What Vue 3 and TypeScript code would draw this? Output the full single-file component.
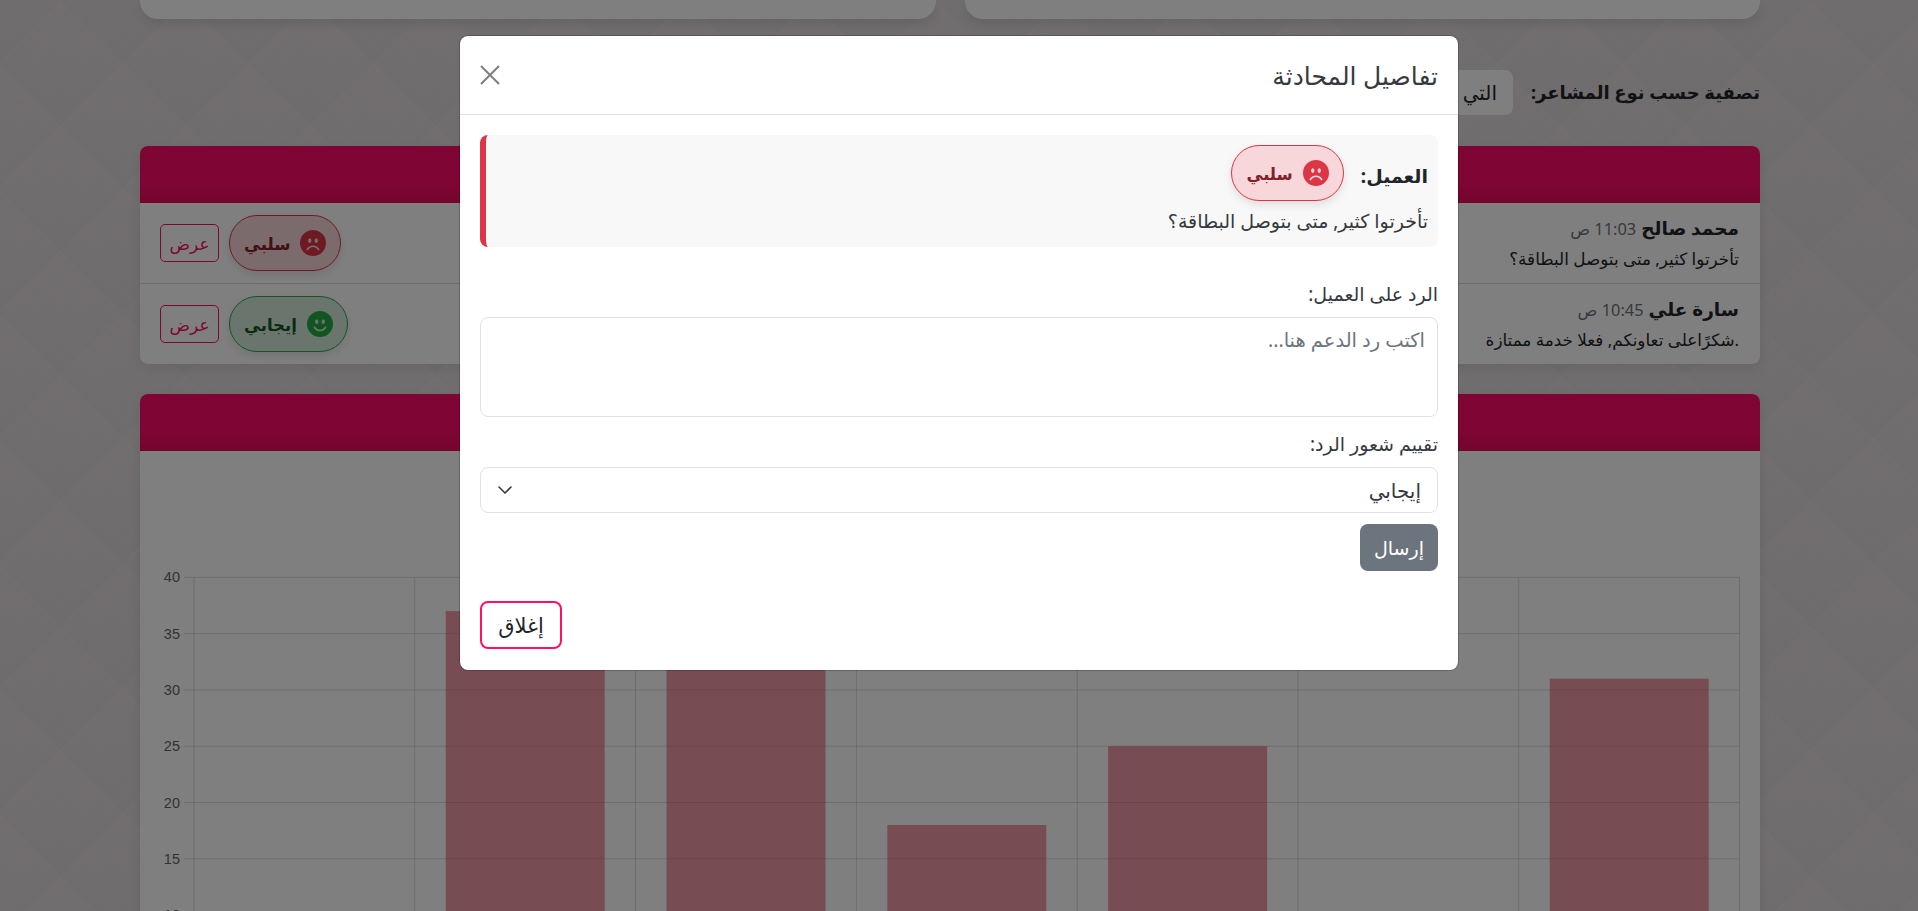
<script setup lang="ts">
import { ref } from 'vue';

interface Chat {
  name: string;
  time: string;
  text: string;
  mood: 'neg' | 'pos';
  label: string;
}

const chats: Chat[] = [
  { name: 'محمد صالح', time: '11:03 ص', text: 'تأخرتوا كثير, متى بتوصل البطاقة؟', mood: 'neg', label: 'سلبي' },
  { name: 'سارة علي', time: '10:45 ص', text: '.شكرًاعلى تعاونكم, فعلا خدمة ممتازة', mood: 'pos', label: 'إيجابي' },
];

const frown =
  'M8 16A8 8 0 1 0 8 0a8 8 0 0 0 0 16M7 6.5C7 7.328 6.552 8 6 8s-1-.672-1-1.5S5.448 5 6 5s1 .672 1 1.5m-2.715 5.933a.5.5 0 0 1-.183-.683A4.5 4.5 0 0 1 8 9.5a4.5 4.5 0 0 1 3.898 2.25.5.5 0 0 1-.866.5A3.5 3.5 0 0 0 8 10.5a3.5 3.5 0 0 0-3.032 1.75.5.5 0 0 1-.683.183M10 8c-.552 0-1-.672-1-1.5S9.448 5 10 5s1 .672 1 1.5S10.552 8 10 8';
const smile =
  'M8 16A8 8 0 1 0 8 0a8 8 0 0 0 0 16M7 6.5C7 7.328 6.552 8 6 8s-1-.672-1-1.5S5.448 5 6 5s1 .672 1 1.5M4.285 9.567a.5.5 0 0 1 .683.183A3.5 3.5 0 0 0 8 11.5a3.5 3.5 0 0 0 3.032-1.75.5.5 0 1 1 .866.5A4.5 4.5 0 0 1 8 12.5a4.5 4.5 0 0 1-3.898-2.25.5.5 0 0 1 .183-.683M10 8c-.552 0-1-.672-1-1.5S9.448 5 10 5s1 .672 1 1.5S10.552 8 10 8';

// chart geometry, in px inside the chart card
const plotLeft = 54;
const plotRight = 1599.5;
const plotTop = 126.3;
const unit = 11.26; // px per count
const slot = 220.8;
const barWidth = 159;

const ticks = [40, 35, 30, 25, 20, 15, 10];
const values = [0, 37, 33, 18, 25, 0, 31];

function yOf(v: number) {
  return plotTop + (40 - v) * unit;
}

const slotLines = values.map((_, i) => plotLeft + slot * i).concat(plotRight);

const selected = ref('إيجابي');
</script>

<template>
  <div class="page" dir="rtl">
    <div class="container">
      <div class="top-cards">
        <div class="top-card"></div>
        <div class="top-card"></div>
      </div>

      <div class="filter">
        <label class="filter-label">تصفية حسب نوع المشاعر:</label>
        <div class="filter-box"><span>التي</span><i class="filter-peek"></i></div>
      </div>

      <section class="card">
        <div class="card-head"></div>
        <div v-for="c in chats" :key="c.name" class="chat-row">
          <div class="chat-info">
            <div class="chat-name">
              <strong>{{ c.name }}</strong>
              <small>{{ c.time }}</small>
            </div>
            <div class="chat-text">{{ c.text }}</div>
          </div>
          <div class="chat-actions">
            <span class="badge" :class="c.mood">
              <svg viewBox="0 0 16 16" width="26" height="26" fill="currentColor">
                <path :d="c.mood === 'neg' ? frown : smile" />
              </svg>
              <b>{{ c.label }}</b>
            </span>
            <button class="view-btn">عرض</button>
          </div>
        </div>
      </section>

      <section class="card chart-card">
        <div class="card-head"></div>
        <svg class="chart" width="1620" height="480" viewBox="0 0 1620 480">
          <line
            v-for="t in ticks"
            :key="t"
            :x1="plotLeft - 10"
            :x2="plotRight"
            :y1="yOf(t)"
            :y2="yOf(t)"
            class="grid"
          />
          <line
            v-for="x in slotLines"
            :key="x"
            :x1="x"
            :x2="x"
            :y1="plotTop"
            y2="480"
            class="grid"
          />
          <template v-for="(v, i) in values" :key="i">
            <rect
              v-if="v > 0"
              :x="plotLeft + slot * i + (slot - barWidth) / 2"
              :y="yOf(v)"
              :width="barWidth"
              :height="480 - yOf(v)"
              class="bar"
            />
          </template>
          <text v-for="t in ticks" :key="'t' + t" x="40" :y="yOf(t) + 5" class="tick">{{ t }}</text>
        </svg>
      </section>
    </div>

    <div class="backdrop"></div>

    <div class="modal">
      <header class="modal-head">
        <h5>تفاصيل المحادثة</h5>
        <button class="close-x" aria-label="close">
          <svg viewBox="0 0 20 20" width="20" height="20" fill="none" stroke="#000" stroke-width="2">
            <path d="M1 1l18 18M19 1L1 19" />
          </svg>
        </button>
      </header>

      <div class="modal-body">
        <div class="msg-box">
          <div class="msg-top">
            <strong>العميل:</strong>
            <span class="badge neg">
              <svg viewBox="0 0 16 16" width="26" height="26" fill="currentColor">
                <path :d="frown" />
              </svg>
              <b>سلبي</b>
            </span>
          </div>
          <p>تأخرتوا كثير, متى بتوصل البطاقة؟</p>
        </div>

        <label class="field-label">الرد على العميل:</label>
        <textarea class="reply" placeholder="اكتب رد الدعم هنا..."></textarea>

        <label class="field-label">تقييم شعور الرد:</label>
        <div class="select-wrap">
          <select v-model="selected">
            <option>إيجابي</option>
            <option>سلبي</option>
            <option>محايد</option>
          </select>
          <svg class="chevron" viewBox="0 0 16 16" width="16" height="16" fill="none" stroke="#343a40" stroke-width="1.6" stroke-linecap="round" stroke-linejoin="round">
            <path d="M2 5l6 6 6-6" />
          </svg>
        </div>

        <button class="send-btn">إرسال</button>
      </div>

      <footer class="modal-foot">
        <button class="close-btn">إغلاق</button>
      </footer>
    </div>
  </div>
</template>

<style>
html,
body {
  margin: 0;
  overflow: hidden;
}
</style>

<style scoped>
.page {
  position: relative;
  height: 911px;
  overflow: hidden;
  font-family: "Noto Sans", "DejaVu Sans", sans-serif;
  color: #212529;
  background-color: #dcd8da;
  background-image:
    linear-gradient(135deg, rgba(255, 235, 235, 0.35) 0, rgba(255, 235, 235, 0.13) 1%, rgba(255, 235, 235, 0) 50%, rgba(255, 235, 235, 0.35) 50%, rgba(255, 235, 235, 0.13) 51%, rgba(255, 235, 235, 0) 100%),
    linear-gradient(225deg, rgba(255, 235, 235, 0.35) 0, rgba(255, 235, 235, 0.13) 1%, rgba(255, 235, 235, 0) 50%, rgba(255, 235, 235, 0.35) 50%, rgba(255, 235, 235, 0.13) 51%, rgba(255, 235, 235, 0) 100%);
  background-size: 125px 125px;
  background-position: 61px 0, 60px 0;
}

.container {
  width: 1620px;
  margin-right: 158px;
}

.top-cards {
  display: flex;
  gap: 29px;
}

.top-card {
  flex: 1;
  height: 19px;
  background: #fff;
  border-radius: 0 0 18px 18px;
  box-shadow: 0 4px 12px rgba(0, 0, 0, 0.1);
}

.filter {
  display: flex;
  align-items: center;
  gap: 20px;
  margin-top: 51px;
}

.filter-label {
  flex: none;
  width: 227px;
  font-size: 18px;
  font-weight: 700;
  line-height: 45px;
  white-space: nowrap;
}

.filter-box {
  display: flex;
  align-items: center;
  gap: 6px;
  width: 300px;
  height: 45px;
  padding: 0 16px;
  box-sizing: border-box;
  background: #fff;
  border-radius: 8px;
  font-size: 20px;
}

.filter-peek {
  width: 3px;
  height: 13px;
  background: #2a6fd0;
}

.card {
  margin-top: 31px;
  background: #fff;
  border-radius: 8px;
  box-shadow: 0 4px 12px rgba(0, 0, 0, 0.08);
  overflow: hidden;
}

.chart-card {
  margin-top: 30px;
  border-radius: 8px 8px 0 0;
}

.card-head {
  height: 57px;
  background: linear-gradient(180deg, #fe0a6a 65%, #e80a58 100%);
}

.chat-row {
  display: flex;
  justify-content: space-between;
  align-items: center;
  height: 80px;
  padding: 0 21px 0 20px;
}

.chat-row + .chat-row {
  border-top: 1px solid rgba(0, 0, 0, 0.15);
}

.chat-name {
  display: flex;
  align-items: baseline;
  gap: 5px;
  line-height: 30px;
}

.chat-name strong {
  font-size: 18.5px;
}

.chat-name small {
  font-size: 16.4px;
  color: #6c757d;
}

.chat-text {
  font-size: 16.8px;
  line-height: 30px;
}

.chat-actions {
  display: flex;
  align-items: center;
  gap: 10px;
}

.badge {
  display: inline-flex;
  align-items: center;
  gap: 10px;
  height: 56px;
  padding: 0 14px;
  box-sizing: border-box;
  border-radius: 28px;
  border: 1px solid;
  box-shadow: 0 4px 8px rgba(0, 0, 0, 0.1);
  font-size: 16.5px;
}

.badge b {
  font-weight: 600;
}

.badge svg {
  flex: none;
}

.badge.neg {
  background: #f8d7da;
  border-color: #dc3545;
  color: #dc3545;
}

.badge.neg b {
  color: #842029;
}

.badge.pos {
  background: #d4edda;
  border-color: #28a745;
  color: #28a745;
}

.badge.pos b {
  color: #155724;
}

.view-btn {
  width: 59px;
  height: 38px;
  padding: 0;
  background: #fff;
  border: 1px solid #fe0a6a;
  border-radius: 5px;
  color: #fe0a6a;
  font: inherit;
  font-size: 17px;
}

.chart {
  display: block;
  direction: ltr;
}

.grid {
  stroke: rgba(0, 0, 0, 0.14);
  stroke-width: 1;
}

.bar {
  fill: rgba(224, 53, 79, 0.5);
}

.tick {
  font-family: "Liberation Sans", sans-serif;
  font-size: 14.5px;
  fill: #666;
  text-anchor: end;
}

.backdrop {
  position: absolute;
  inset: 0;
  background: rgba(0, 0, 0, 0.5);
}

.modal {
  position: absolute;
  top: 35px;
  left: 459px;
  width: 1000px;
  box-sizing: border-box;
  background: #fff;
  border: 1px solid rgba(0, 0, 0, 0.2);
  border-radius: 9px;
  background-clip: padding-box;
}

.modal-head {
  display: flex;
  justify-content: space-between;
  align-items: center;
  height: 78px;
  padding: 0 20px;
  border-bottom: 1px solid #dee2e6;
}

.modal-head h5 {
  margin: 0;
  font-size: 25px;
  font-weight: 400;
  color: #343a40;
}

.close-x {
  display: flex;
  padding: 0;
  background: none;
  border: 0;
  opacity: 0.5;
}

.modal-body {
  display: flex;
  flex-direction: column;
  padding: 20px 20px 20px;
}

.msg-box {
  height: 112px;
  padding: 10px 10px 10px 0;
  box-sizing: border-box;
  background: #f8f8f8;
  border-left: 6px solid #dc3545;
  border-radius: 8px;
  margin-bottom: 32px;
}

.msg-top {
  display: flex;
  align-items: center;
  gap: 17px;
}

.msg-top strong {
  margin-top: 5px;
  font-size: 19px;
}

.msg-box p {
  margin: 4px 0 0;
  font-size: 19px;
  line-height: 32px;
  color: #343a40;
}

.field-label {
  font-size: 19px;
  line-height: 30px;
  margin-bottom: 8px;
  color: #343a40;
}

.reply {
  display: block;
  height: 100px;
  margin-bottom: 12px;
  padding: 6px 12px;
  box-sizing: border-box;
  border: 1px solid #dee2e6;
  border-radius: 8px;
  font: inherit;
  font-size: 19.5px;
  line-height: 32px;
  outline: none;
  resize: none;
}

.reply::placeholder {
  color: #6c757d;
}

.select-wrap {
  position: relative;
}

.select-wrap select {
  display: block;
  width: 100%;
  height: 46px;
  padding: 0 16px;
  box-sizing: border-box;
  appearance: none;
  background: #fff;
  border: 1px solid #dee2e6;
  border-radius: 8px;
  color: #343a40;
  font: inherit;
  font-size: 20px;
}

.chevron {
  position: absolute;
  left: 17px;
  top: 15px;
  pointer-events: none;
}

.send-btn {
  align-self: flex-start;
  width: 78px;
  height: 47px;
  padding: 0;
  margin-top: 11px;
  background: #6c757d;
  border: 0;
  border-radius: 8px;
  color: #fff;
  font: inherit;
  font-size: 19px;
}

.modal-foot {
  display: flex;
  justify-content: flex-end;
  padding: 10px 20px 21px;
}

.close-btn {
  width: 82px;
  height: 48px;
  padding: 0;
  background: #fff;
  border: 2px solid #ff0f68;
  border-radius: 8px;
  color: #212529;
  font: inherit;
  font-size: 21px;
}
</style>
